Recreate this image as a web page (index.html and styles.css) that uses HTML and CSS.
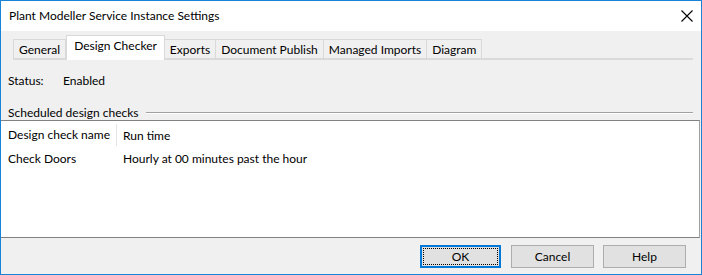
FILE: index.html
```html
<!DOCTYPE html>
<html>
<head>
<meta charset="utf-8">
<link rel="stylesheet" href="styles.css">
</head>
<body>
<div class="window">
  <div class="titlebar">
    <span class="title">Plant Modeller Service Instance Settings</span>
    <svg class="close" width="12" height="12" viewBox="0 0 12 12"><path d="M0.5 0.5 L11.5 11.5 M11.5 0.5 L0.5 11.5" stroke="#000" stroke-width="1.1" fill="none"/></svg>
  </div>
  <div class="content">
    <div class="tabs">
      <div class="tab">General</div>
      <div class="tab active">Design Checker</div>
      <div class="tab">Exports</div>
      <div class="tab">Document Publish</div>
      <div class="tab">Managed Imports</div>
      <div class="tab">Diagram</div>
    </div>
    <div class="status">
      <span class="label">Status:</span>
      <span>Enabled</span>
    </div>
    <div class="group">
      <span>Scheduled design checks</span>
      <div class="groupline"></div>
    </div>
    <div class="list">
      <div class="row head">
        <div class="c1 hcell">Design check name</div>
        <div class="c2">Run time</div>
      </div>
      <div class="row">
        <div class="c1">Check Doors</div>
        <div class="c2">Hourly at 00 minutes past the hour</div>
      </div>
    </div>
    <div class="buttons">
      <button class="btn default"><span class="focus">OK</span></button>
      <button class="btn">Cancel</button>
      <button class="btn">Help</button>
    </div>
  </div>
</div>
</body>
</html>
```

FILE: styles.css
```css
* { box-sizing: border-box; }
html, body { margin: 0; padding: 0; }
body {
  font-family: "Lato", "Noto Sans", sans-serif;
  font-size: 12px;
  color: #000;
  background: #fff;
  white-space: nowrap;
}
.window {
  width: 702px;
  height: 275px;
  border: 1px solid #1883d7;
  display: flex;
  flex-direction: column;
  background: #f0f0f0;
}
.titlebar {
  height: 30px;
  background: #fff;
  display: flex;
  align-items: center;
  justify-content: space-between;
  padding: 0 8px 0 8px;
  flex: none;
}
.title { line-height: 16px; }
.content {
  flex: 1;
  display: flex;
  flex-direction: column;
  padding-top: 6px;
}
.tabs {
  display: flex;
  align-items: flex-end;
  margin: 0 8px 0 12px;
  border-bottom: 2px solid #dadada;
  height: 23px;
}
.tab {
  height: 19px;
  line-height: 19px;
  padding: 0 5px;
  border: 1px solid #d9d9d9;
  border-bottom: none;
  border-left: none;
  background: #f0f0f0;
}
.tab:first-child { border-left: 1px solid #d9d9d9; }
.tab.active {
  line-height: 19px;
  padding: 0 7px 2px 7px;
  background: #fff;
  margin-bottom: -2px;
  height: 25px;
  border-left: 1px solid #d9d9d9;
}
.status {
  display: flex;
  padding: 13px 0 0 7px;
  height: 35px;
  line-height: 16px;
}
.status .label { width: 55px; }
.group {
  display: flex;
  align-items: center;
  padding: 10px 8px 0 7px;
  line-height: 15px;
}
.groupline {
  flex: 1;
  height: 2px;
  border-top: 1px solid #a0a0a0;
  border-bottom: 1px solid #fff;
  margin-left: 7px;
}
.list {
  height: 118px;
  background: #fff;
  border-top: 1px solid #828282;
  border-bottom: 1px solid #828282;
  border-right: 1px solid #a0a0a0;
  margin-right: 1px;
  padding-top: 2px;
}
.row {
  display: flex;
  height: 23px;
  align-items: center;
}
.row.head { height: 24px; }
.c1 { width: 116px; padding-left: 7px; }
.c2 { padding-left: 6px; }
.hcell { border-right: 1px solid #e5e5e5; height: 22px; line-height: 22px; }
.buttons {
  display: flex;
  justify-content: flex-end;
  gap: 9px;
  padding: 7px 15px 0 0;
}
.btn {
  font: inherit;
  width: 83px;
  height: 23px;
  background: #e1e1e1;
  border: 1px solid #adadad;
  padding: 0;
  color: #000;
}
.btn.default {
  width: 81px;
  border: 2px solid #0078d7;
  padding: 1px;
  margin-right: 1px;
}
.focus {
  display: flex;
  align-items: center;
  justify-content: center;
  height: 100%;
  border: 1px dotted #000;
}
```
